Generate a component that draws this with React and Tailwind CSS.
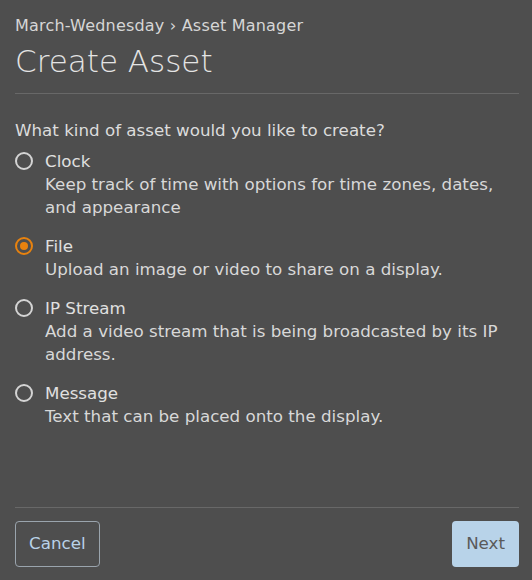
import { useState } from "react";

const OPTIONS = [
  {
    id: "clock",
    label: "Clock",
    description: "Keep track of time with options for time zones, dates, and appearance",
  },
  {
    id: "file",
    label: "File",
    description: "Upload an image or video to share on a display.",
  },
  {
    id: "ip",
    label: "IP Stream",
    description: "Add a video stream that is being broadcasted by its IP address.",
  },
  {
    id: "message",
    label: "Message",
    description: "Text that can be placed onto the display.",
  },
];

const Radio = ({ checked }) => (
  <span
    className={`flex h-[18px] w-[18px] shrink-0 items-center justify-center rounded-full border-2 ${
      checked ? "border-[#e8820e]" : "border-[#d4d4d4]"
    }`}
  >
    {checked && <span className="h-[8px] w-[8px] rounded-full bg-[#e8820e]" />}
  </span>
);

export default function App() {
  const [selected, setSelected] = useState("file");

  return (
    <div
      className="flex h-[580px] w-[532px] flex-col bg-[#4e4e4e] pl-[15px] pr-[13px] text-[#dcdcdc]"
      style={{ fontFamily: '"DejaVu Sans", sans-serif' }}
    >
      <div className="pt-[14px] text-[16px] leading-[24px] tracking-[0.2px] text-[#d6d6d6]">
        March-Wednesday › Asset Manager
      </div>
      <h1 className="mt-[3px] text-[31px] font-light leading-[40px] text-[#e4e4e4]">Create Asset</h1>
      <div className="mt-[12px] h-px bg-[#686868]" />

      <div className="mt-[24px] text-[16.7px] leading-[24px]">What kind of asset would you like to create?</div>

      <div className="mt-[7px] flex flex-col gap-[15px]">
        {OPTIONS.map((opt) => (
          <label key={opt.id} className="flex cursor-pointer gap-[12px]" onClick={() => setSelected(opt.id)}>
            <span className="pt-[3px]">
              <Radio checked={selected === opt.id} />
            </span>
            <span className="flex flex-col">
              <span className="text-[16.7px] leading-[24px] text-[#e0e0e0]">{opt.label}</span>
              <span className="text-[16.7px] leading-[23px] text-[#d8d8d8]">{opt.description}</span>
            </span>
          </label>
        ))}
      </div>

      <div className="mt-auto h-px bg-[#686868]" />
      <div className="flex items-center justify-between pb-[13px] pt-[13px]">
        <button className="h-[46px] rounded-[4px] border border-[#9aa4ad] px-[13px] text-[16.7px] text-[#b9d2e8]">
          Cancel
        </button>
        <button className="h-[46px] rounded-[4px] bg-[#b8d3e9] px-[14px] text-[16.7px] text-[#5a5a5a]">Next</button>
      </div>
    </div>
  );
}
